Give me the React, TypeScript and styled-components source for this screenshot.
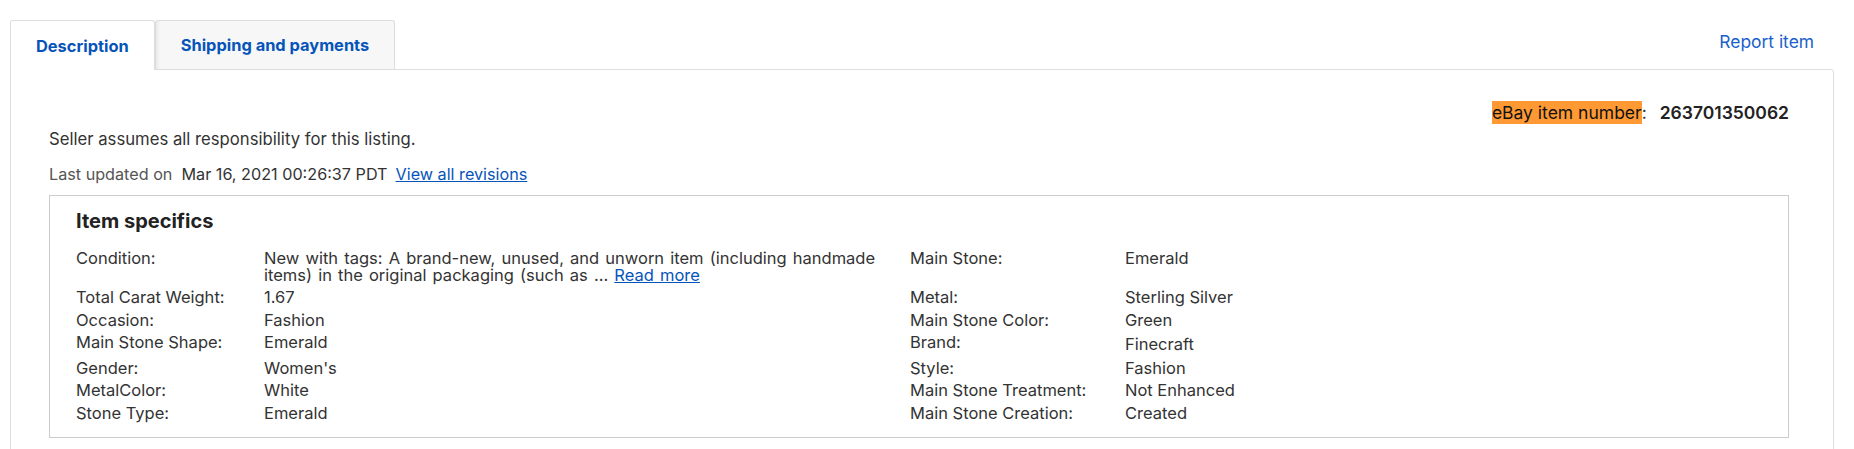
import React from 'react';
import styled, { createGlobalStyle } from 'styled-components';

const GlobalStyle = createGlobalStyle`
  html, body {
    margin: 0;
    padding: 0;
    background: #fff;
    overflow: hidden;
  }
  body {
    font-family: Inter, "Open Sans", "Liberation Sans", sans-serif;
    color: #333;
  }
`;

const Page = styled.div`
  padding: 20px 20px 0 10px;
`;

const TabBar = styled.div`
  display: flex;
  align-items: flex-start;
`;

const Tabs = styled.div`
  display: flex;
  align-items: flex-start;
`;

const Tab = styled.div<{ $active?: boolean }>`
  display: flex;
  align-items: center;
  justify-content: center;
  height: ${p => (p.$active ? '50px' : '49px')};
  margin-bottom: ${p => (p.$active ? '-1px' : '0')};
  padding: 0 25px;
  box-sizing: border-box;
  border: 1px solid #ddd;
  border-bottom: none;
  border-radius: 3px 3px 0 0;
  background: ${p => (p.$active ? '#fff' : '#f7f7f7')};
  box-shadow: ${p => (p.$active ? 'none' : 'inset 4px 0 3px -2px rgba(0, 0, 0, 0.06)')};
  color: #0654ba;
  font-size: 16.4px;
  font-weight: 700;
  position: relative;
  z-index: ${p => (p.$active ? 1 : 0)};
`;

const ReportLink = styled.a`
  margin: 12px 20px 0 auto;
  line-height: 20px;
  font-size: 17.4px;
  color: #1b5fcb;
  text-decoration: none;
`;

const Panel = styled.div`
  border: 1px solid #ddd;
  border-radius: 0 3px 0 0;
  padding: 31px 44px 16px 38px;
`;

const ItemNumberRow = styled.div`
  display: flex;
  justify-content: flex-end;
  align-items: center;
  height: 23px;
  font-size: 17.5px;
`;

const Highlight = styled.span`
  background: #ff9933;
  color: #111;
  line-height: 23px;
`;

const ItemNumber = styled.span`
  margin-left: 13px;
  font-weight: 600;
  color: #222;
`;

const Notice = styled.div`
  margin-top: 5px;
  font-size: 16.7px;
  line-height: 20px;
`;

const Updated = styled.div`
  margin-top: 15px;
  font-size: 16.2px;
  line-height: 20px;
  color: #555;
`;

const UpdatedDate = styled.span`
  color: #333;
  margin-left: 9px;
  margin-right: 8px;
`;

const Link = styled.a`
  color: #0654ba;
  text-decoration: underline;
`;

const SpecsBox = styled.div`
  margin-top: 11px;
  border: 1px solid #ccc;
  padding: 13px 26px 10px 26px;
`;

const SpecsTitle = styled.h2`
  margin: 0 0 17px;
  font-size: 20px;
  line-height: 24px;
  font-weight: 700;
  color: #222;
`;

const SpecRow = styled.div`
  display: grid;
  grid-template-columns: 188px 646px 215px 1fr;
  padding-bottom: 5.3px;
  font-size: 16.5px;
  line-height: 17px;
`;

const Label = styled.div`
  color: #333;
`;

const Value = styled.div<{ $loose?: boolean; $wide?: boolean }>`
  color: #333;
  padding-right: 10px;
  line-height: ${p => (p.$loose ? '21px' : '17px')};
  word-spacing: ${p => (p.$wide ? '1.5px' : 'normal')};
`;

type Spec = { label: string; value: React.ReactNode; loose?: boolean; wide?: boolean };

const rows: [Spec, Spec][] = [
  [
    {
      label: 'Condition:',
      wide: true,
      value: (
        <>
          New with tags: A brand-new, unused, and unworn item (including handmade items) in the original packaging (such as …{' '}
          <Link href="#">Read more</Link>
        </>
      ),
    },
    { label: 'Main Stone:', value: 'Emerald' },
  ],
  [
    { label: 'Total Carat Weight:', value: '1.67' },
    { label: 'Metal:', value: 'Sterling Silver' },
  ],
  [
    { label: 'Occasion:', value: 'Fashion' },
    { label: 'Main Stone Color:', value: 'Green' },
  ],
  [
    { label: 'Main Stone Shape:', value: 'Emerald' },
    { label: 'Brand:', value: 'Finecraft', loose: true },
  ],
  [
    { label: 'Gender:', value: "Women's" },
    { label: 'Style:', value: 'Fashion' },
  ],
  [
    { label: 'MetalColor:', value: 'White' },
    { label: 'Main Stone Treatment:', value: 'Not Enhanced' },
  ],
  [
    { label: 'Stone Type:', value: 'Emerald' },
    { label: 'Main Stone Creation:', value: 'Created' },
  ],
];

const App: React.FC = () => {
  return (
    <Page>
      <GlobalStyle />
      <TabBar>
        <Tabs>
          <Tab $active>Description</Tab>
          <Tab>Shipping and payments</Tab>
        </Tabs>
        <ReportLink href="#">Report item</ReportLink>
      </TabBar>

      <Panel>
        <ItemNumberRow>
          <Highlight>eBay item number</Highlight>:
          <ItemNumber>263701350062</ItemNumber>
        </ItemNumberRow>

        <Notice>Seller assumes all responsibility for this listing.</Notice>
        <Updated>
          Last updated on
          <UpdatedDate>Mar 16, 2021 00:26:37 PDT</UpdatedDate>
          <Link href="#">View all revisions</Link>
        </Updated>

        <SpecsBox>
          <SpecsTitle>Item specifics</SpecsTitle>
          {rows.map(([left, right], i) => (
            <SpecRow key={i}>
              <Label>{left.label}</Label>
              <Value $loose={left.loose} $wide={left.wide}>{left.value}</Value>
              <Label>{right.label}</Label>
              <Value $loose={right.loose} $wide={right.wide}>{right.value}</Value>
            </SpecRow>
          ))}
        </SpecsBox>
      </Panel>
    </Page>
  );
};

export default App;
